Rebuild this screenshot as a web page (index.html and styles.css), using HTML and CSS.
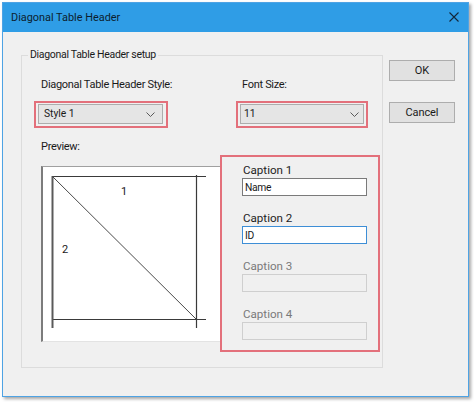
FILE: index.html
```html
<!DOCTYPE html>
<html>
<head>
<meta charset="utf-8">
<link rel="stylesheet" href="styles.css">
</head>
<body>
<div class="window">
  <div class="titlebar">
    <span class="title">Diagonal Table Header</span>
    <svg class="close" width="10" height="10" viewBox="0 0 10 10"><path d="M0.5 0.5 L9.5 9.5 M9.5 0.5 L0.5 9.5" stroke="#13273a" stroke-width="1.1" fill="none"/></svg>
  </div>
  <div class="body">
    <div class="group">
      <span class="legend">Diagonal Table Header setup</span>
      <div class="row1">
        <div class="col col-style">
          <div class="label">Diagonal Table Header Style:</div>
          <div class="hl hl-style">
            <div class="combo"><span class="combo-text">Style 1</span><svg class="chev" width="9" height="5" viewBox="0 0 9 5"><path d="M0.5 0.5 L4.5 4.5 L8.5 0.5" stroke="#5a5a5a" stroke-width="1" fill="none"/></svg></div>
          </div>
        </div>
        <div class="col col-size">
          <div class="label label-size">Font Size:</div>
          <div class="hl hl-size">
            <div class="combo combo-size"><span class="combo-text">11</span><svg class="chev" width="9" height="5" viewBox="0 0 9 5"><path d="M0.5 0.5 L4.5 4.5 L8.5 0.5" stroke="#5a5a5a" stroke-width="1" fill="none"/></svg></div>
          </div>
        </div>
      </div>
      <div class="row2">
        <div class="preview-col">
          <div class="label label-preview">Preview:</div>
          <div class="preview">
            <svg class="diagram" width="177" height="175" viewBox="0 0 177 175">
              <line x1="9" y1="9.5" x2="163" y2="9.5" stroke="#3a3a3a" stroke-width="1.2"/>
              <line x1="9" y1="152.5" x2="163" y2="152.5" stroke="#3a3a3a" stroke-width="1.2"/>
              <line x1="9.5" y1="9" x2="9.5" y2="161" stroke="#5a5a5a" stroke-width="2"/>
              <line x1="153.5" y1="8" x2="153.5" y2="161" stroke="#3a3a3a" stroke-width="1.2"/>
              <line x1="9" y1="9" x2="153" y2="152" stroke="#4a4a4a" stroke-width="1"/>
              <text x="81" y="28" class="num" text-anchor="middle">1</text>
              <text x="22" y="86" class="num" text-anchor="middle">2</text>
            </svg>
          </div>
        </div>
        <div class="hl captions">
          <div class="cap">
            <div class="cap-label">Caption 1</div>
            <input class="field" type="text" value="Name" readonly>
          </div>
          <div class="cap">
            <div class="cap-label">Caption 2</div>
            <input class="field field-focus" type="text" value="ID" readonly>
          </div>
          <div class="cap">
            <div class="cap-label cap-disabled">Caption 3</div>
            <input class="field field-disabled" type="text" disabled>
          </div>
          <div class="cap">
            <div class="cap-label cap-disabled">Caption 4</div>
            <input class="field field-disabled" type="text" disabled>
          </div>
        </div>
      </div>
    </div>
    <div class="buttons">
      <button class="btn">OK</button>
      <button class="btn">Cancel</button>
    </div>
  </div>
</div>
</body>
</html>
```

FILE: styles.css
```css
* { box-sizing: border-box; }
html, body { margin: 0; padding: 0; background: #ffffff; }
body {
  font-family: Roboto, "Liberation Sans", Arial, sans-serif;
  font-size: 11px;
  color: #1a1a1a;
  width: 474px;
  height: 402px;
  overflow: hidden;
}
.window {
  margin: 2px 0 0 2px;
  width: 467px;
  height: 395px;
  border: 1px solid #4ea3e4;
  background: #f0f0f0;
  box-shadow: 2px 2px 3px rgba(0,0,0,0.35);
  display: flex;
  flex-direction: column;
}
.titlebar {
  height: 29px;
  flex: none;
  background: #2f9de6;
  display: flex;
  align-items: center;
  justify-content: space-between;
  padding: 0 9px 0 8px;
}
.title {
  font-size: 10.9px;
  color: #0c1d2e;
  line-height: 16px;
  margin-top: 1px;
}
.close { display: block; margin-top: -1px; }
.body {
  flex: 1;
  display: flex;
  align-items: flex-start;
}
.group {
  position: relative;
  margin: 23px 0 0 18px;
  width: 362px;
  height: 313px;
  border: 1px solid #dcdcdc;
  padding-top: 21px;
}
.legend {
  position: absolute;
  top: -9px;
  left: 6px;
  padding: 0 2px;
  background: #f0f0f0;
  line-height: 16px;
  font-size: 10.5px;
  letter-spacing: -0.3px;
  color: #1a1a1a;
}
.label { line-height: 16px; white-space: nowrap; letter-spacing: -0.3px; }
.row1 { display: flex; }
.col-style { margin-left: 12px; width: 202px; }
.col-style .label { padding-left: 7px; }
.col-size .label { padding-left: 6px; }
.hl { border: 2px solid #e3707b; }
.hl-style {
  margin-top: 8px;
  width: 134px;
  height: 27px;
  padding: 1px 3px 2px 2px;
}
.hl-size {
  margin-top: 8px;
  width: 132px;
  height: 27px;
  padding: 1px 2px 2px 2px;
}
.combo {
  width: 125px;
  height: 20px;
  background: #e5e5e5;
  border: 1px solid #adadad;
  display: flex;
  align-items: center;
  justify-content: space-between;
  padding: 0 7px 0 5px;
}
.combo-size { width: 124px; padding-left: 3px; padding-right: 4px; }
.combo-text { line-height: 16px; font-size: 10.3px; }
.chev { display: block; }
.row2 { display: flex; margin-top: 11px; align-items: flex-start; }
.preview-col { margin-left: 19px; width: 179px; }
.label-preview { padding-left: 0; }
.preview {
  margin-top: 11px;
  width: 179px;
  height: 176px;
  background: #ffffff;
  border-top: 1px solid #a0a0a0;
  border-left: 2px solid #7c7c7c;
  border-bottom: 1px solid #e3e3e3;
}
.diagram { display: block; }
.num { font-family: Roboto, "Liberation Sans", Arial, sans-serif; font-size: 11px; fill: #1a1a1a; }
.captions {
  margin-top: 16px;
  width: 160px;
  height: 197px;
  padding: 5px 0 0 20px;
}
.cap { margin-bottom: 14px; }
.cap-label { line-height: 16px; padding-left: 1px; font-size: 11.6px; color: #1e1e1e; }
.cap-disabled { color: #7a7a7a; }
.field {
  display: block;
  width: 125px;
  height: 18px;
  margin: 0;
  border: 1px solid #7a7a7a;
  background: #ffffff;
  font-family: Roboto, "Liberation Sans", Arial, sans-serif;
  font-size: 10.3px;
  letter-spacing: -0.3px;
  color: #1a1a1a;
  padding: 0 2px;
  outline: none;
}
.field-focus { border-color: #3d8ed6; }
.field-disabled { border-color: #cfcfcf; background: #f0f0f0; }
.buttons {
  margin: 28px 0 0 6px;
  display: flex;
  flex-direction: column;
  gap: 21px;
}
.btn {
  width: 66px;
  height: 21px;
  margin: 0;
  padding: 0;
  background: #e1e1e1;
  border: 1px solid #adadad;
  border-radius: 0;
  font-family: Roboto, "Liberation Sans", Arial, sans-serif;
  font-size: 11px;
  letter-spacing: -0.1px;
  color: #1a1a1a;
}
```
